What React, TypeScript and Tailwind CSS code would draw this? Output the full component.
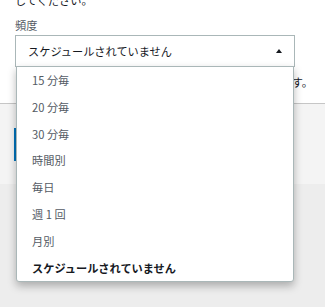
import React from "react";

const options = [
  "15 分毎",
  "20 分毎",
  "30 分毎",
  "時間別",
  "毎日",
  "週 1 回",
  "月別",
  "スケジュールされていません",
];

const font = {
  fontFamily: '"Noto Sans CJK JP", "Noto Sans", sans-serif',
};

export default function App() {
  const selected = "スケジュールされていません";

  return (
    <div
      className="relative w-[325px] h-[307px] overflow-hidden bg-[#ededed] text-[#16191f]"
      style={font}
    >
      {/* form section */}
      <div className="bg-white border-b border-[#c6c6c6] h-[114px] px-[15px]">
        <p className="h-[20px] mt-[-10px] text-[11.2px] leading-[20px] text-[#16191f]">
          してください。
        </p>
        <label className="block h-[25px] pt-[5px] text-[11.2px] leading-[20px] text-[#545b64]">
          頻度
        </label>
        <div className="flex items-center justify-between w-[280px] h-[32px] border border-[#aab7b8] pl-[12px] pr-[12px]">
          <span className="text-[11.2px] text-[#16191f]">{selected}</span>
          <svg width="6" height="4" viewBox="0 0 6 4">
            <path d="M0 4 L3 0 L6 4 Z" fill="#16191f" />
          </svg>
        </div>
        <div className="flex justify-end mt-[5px] -mr-[3px]">
          <span className="text-[11.2px] leading-[20px] whitespace-nowrap text-[#16191f]">
            定期的に実行されます。
          </span>
        </div>
      </div>

      {/* panel behind */}
      <div className="h-[80px] bg-[#f4f4f4] pl-[14px] pt-[24px]">
        <div className="w-[2px] h-[33px] bg-[#0073bb]" />
      </div>

      {/* dropdown list */}
      <ul className="absolute left-[16px] top-[66px] w-[278px] bg-white border border-[#aab7b8] rounded-b-[3px] shadow-[0_4px_9px_rgba(0,0,0,0.28)]">
        {options.map((o) => (
          <li
            key={o}
            className={
              o === selected
                ? "h-[26.8px] flex items-center pl-[15px] text-[11.2px] font-bold text-[#16191f]"
                : "h-[26.8px] flex items-center pl-[15px] text-[11.2px] text-[#545b64]"
            }
          >
            {o}
          </li>
        ))}
      </ul>
    </div>
  );
}
